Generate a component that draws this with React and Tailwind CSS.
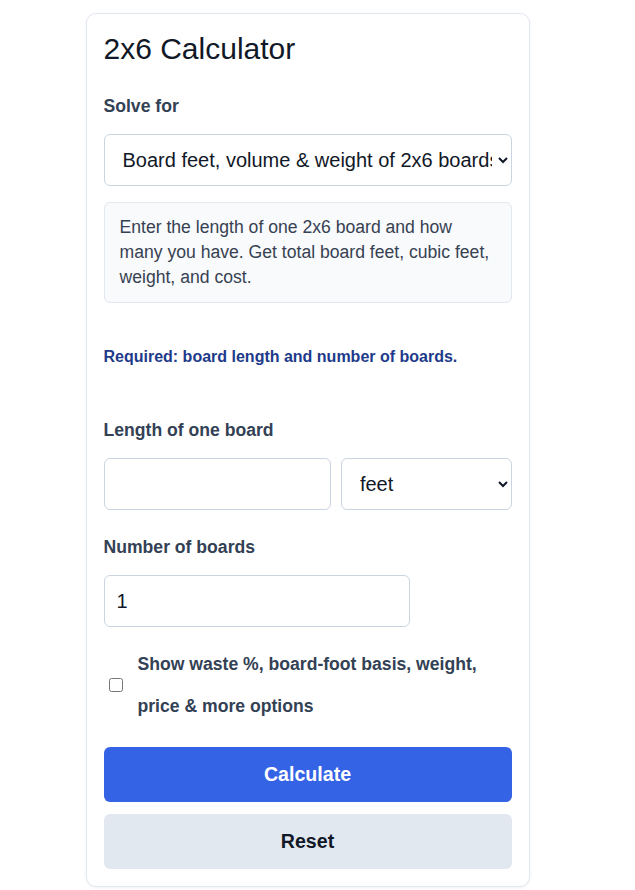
import React, { useState } from 'react';

const labelCls = "block text-[17.6px] leading-[26px] font-bold text-[#334155] mb-[15px]";
const fieldCls = "h-[52px] px-3 bg-white border border-[#cbd5e1] rounded-md text-[20px] text-[#111827] focus:outline-none";
const selectCls = "h-[52px] pl-[14px] pr-[3px] bg-white border border-[#cbd5e1] rounded-md text-[20px] text-[#111827] focus:outline-none";

const App = () => {
    const [mode, setMode] = useState('volume');
    const [length, setLength] = useState('');
    const [unit, setUnit] = useState('feet');
    const [count, setCount] = useState('1');
    const [more, setMore] = useState(false);

    const reset = () => {
        setLength('');
        setUnit('feet');
        setCount('1');
        setMore(false);
    };

    return (
        <div className="w-[615px] min-h-screen bg-white font-['Liberation_Sans',Arial,sans-serif]">
            <div className="w-[444px] mx-auto mt-[13px] bg-white border border-[#e2e8f0] rounded-[10px] shadow-[0_1px_3px_rgba(15,23,42,0.06)] px-[17px] pt-[17px] pb-[17px]">
                {/* Header */}
                <h1 className="text-[30px] leading-[36px] font-normal text-[#111827] mb-[26px]">2x6 Calculator</h1>

                <label className={labelCls}>Solve for</label>
                <select
                    value={mode}
                    onChange={(e) => setMode(e.target.value)}
                    className={`${selectCls} w-full`}
                >
                    <option value="volume">Board feet, volume &amp; weight of 2x6 boards</option>
                    <option value="count">Number of 2x6 boards needed</option>
                </select>

                {/* Description */}
                <div className="mt-4 bg-[#f8fafc] border border-[#e2e8f0] rounded-md px-[15px] py-3 text-[17.6px] leading-[25px] text-[#374151]">
                    Enter the length of one 2x6 board and how many you have. Get total board feet, cubic feet, weight, and cost.
                </div>

                <p className="mt-[42px] text-[16px] leading-[24px] font-bold text-[#1e3a8a]">
                    Required: board length and number of boards.
                </p>

                {/* Length */}
                <div className="mt-[48px]">
                    <label className={labelCls}>Length of one board</label>
                    <div className="grid grid-cols-[4fr_3fr] gap-[10px]">
                        <input
                            type="number"
                            value={length}
                            onChange={(e) => setLength(e.target.value)}
                            className={`${fieldCls} w-full`}
                        />
                        <select
                            value={unit}
                            onChange={(e) => setUnit(e.target.value)}
                            className={`${selectCls} w-full`}
                        >
                            <option value="feet">feet</option>
                            <option value="inches">inches</option>
                            <option value="meters">meters</option>
                        </select>
                    </div>
                </div>

                {/* Count */}
                <div className="mt-6">
                    <label className={labelCls}>Number of boards</label>
                    <input
                        type="number"
                        value={count}
                        onChange={(e) => setCount(e.target.value)}
                        className={`${fieldCls} w-3/4`}
                    />
                </div>

                {/* More options */}
                <label className="mt-4 flex items-center gap-[15px] cursor-pointer">
                    <input
                        type="checkbox"
                        checked={more}
                        onChange={(e) => setMore(e.target.checked)}
                        className="ml-[5px] w-[14px] h-[14px] shrink-0"
                    />
                    <span className="text-[17.6px] leading-[42px] font-bold text-[#334155]">
                        Show waste %, board-foot basis, weight, price &amp; more options
                    </span>
                </label>

                {/* Actions */}
                <button
                    type="button"
                    className="mt-5 w-full h-[55px] rounded-md bg-[#3563e5] text-white text-[19.6px] font-bold"
                >
                    Calculate
                </button>
                <button
                    type="button"
                    onClick={reset}
                    className="mt-3 w-full h-[55px] rounded-md bg-[#e2e8f0] text-[#111827] text-[19.6px] font-bold"
                >
                    Reset
                </button>
            </div>
        </div>
    );
};

export default App;
